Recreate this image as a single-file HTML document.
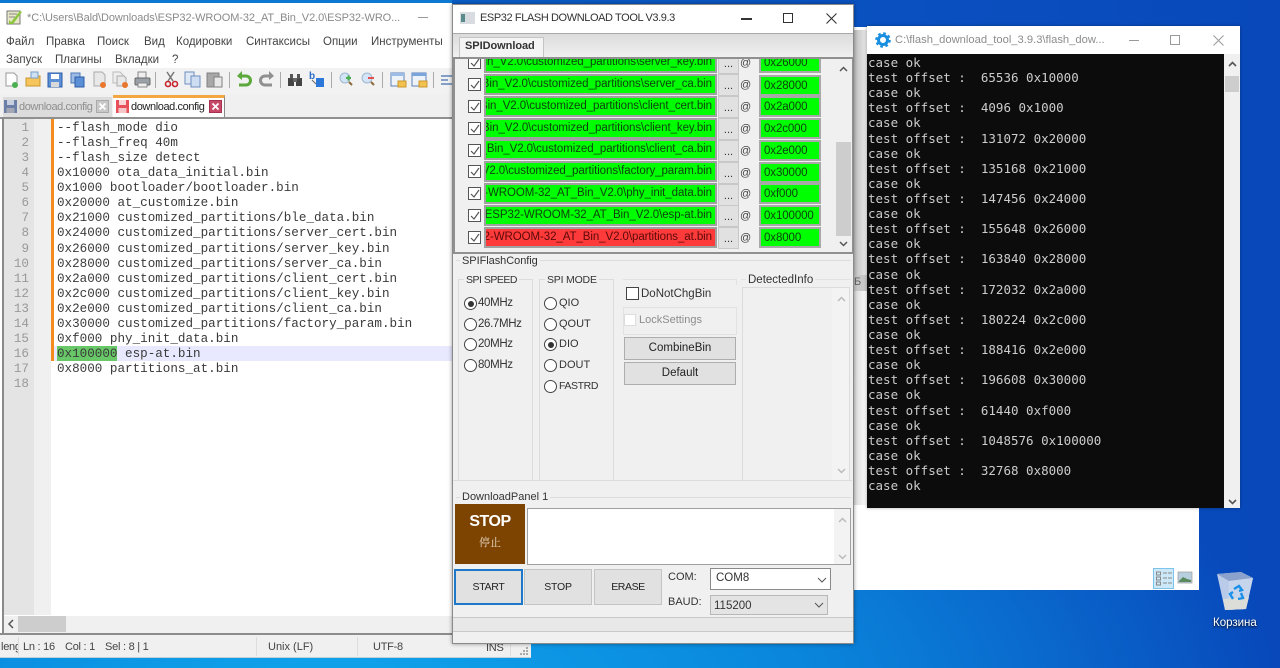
<!DOCTYPE html>
<html><head><meta charset="utf-8"><style>
html,body{margin:0;padding:0;width:1280px;height:668px;overflow:hidden}
body{position:relative;font-family:"Liberation Sans","Noto Sans CJK SC",sans-serif;font-size:11.5px;color:#222;background:radial-gradient(ellipse 950px 420px at 330px 700px,#0fa6ec 0,#0a86dc 50%,rgba(10,76,188,0) 100%),linear-gradient(90deg,#0a6acb 0,#0a50c0 70%,#0848ba 100%);filter:blur(.3px)}
div,span{position:absolute;box-sizing:border-box}
.t{white-space:nowrap;line-height:14px}
svg{position:absolute;overflow:visible}
.mono{font-family:"Liberation Mono",monospace;font-size:12.6px;line-height:15.07px;white-space:pre;color:#3a3a3a}
.con{font-family:"DejaVu Sans Mono","Liberation Mono",monospace;font-size:12.5px;line-height:15.11px;white-space:pre;color:#ccc}
.f{background:#0f0;border:2px solid #a0a0a0;overflow:hidden;left:484px;width:233px;height:21px}
.f span{right:3px;top:1px;white-space:nowrap;line-height:15px;color:#0f420f;font-size:11.5px;letter-spacing:-.07px}
.a{background:#0f0;border:2px solid #a8a8a8;left:759px;width:62px;height:21px;padding:2px 0 0 3px;line-height:14px;font-size:11.5px;letter-spacing:-.1px;color:#0f420f;white-space:nowrap}
.b{background:#e1e1e1;border:1px solid #c8c8c8;left:718px;width:21px;height:22px;text-align:center;line-height:22px;font-size:11px;color:#333}
.at{left:740px;width:11px;text-align:center;color:#444;font-size:11px;line-height:14px}
.c{left:468px;width:13px;height:13px;border:1px solid #555;background:#fff}
.c svg{left:1px;top:1px}
.r{width:13px;height:13px;border:1px solid #444;border-radius:50%;background:#fff}
.r i{position:absolute;left:2.5px;top:2.5px;width:6px;height:6px;border-radius:50%;background:#333}
.btn{background:#e1e1e1;border:1px solid #adadad;text-align:center;color:#222}
.g{border:1px solid #dcdcdc}
.m{color:#444;font-size:11.5px}
.s{color:#444;font-size:11px;letter-spacing:-.25px}
</style></head><body>

<!-- window behind -->
<div style="left:853px;top:27px;width:346px;height:563px;background:#fff"></div>
<div style="left:853px;top:30px;width:14px;height:245px;background:linear-gradient(90deg,#bdbdbd,#e8e8e8)"></div>
<div style="left:853px;top:275px;width:14px;height:16px;background:#c8c8c8;color:#666;font-size:11px;line-height:14px;overflow:hidden;padding-left:1px">Б</div>
<div style="left:853px;top:291px;width:14px;height:214px;background:linear-gradient(90deg,#d8d8d8,#fbfbfb)"></div>
<div style="left:1153px;top:568px;width:21px;height:21px;background:#cde8f8;border:1px solid #7cc4ea"></div>
<svg style="left:1156px;top:571px" width="18" height="16" fill="none" stroke="#888"><rect x=".5" y="1" width="4" height="3"/><rect x=".5" y="6" width="4" height="3"/><rect x=".5" y="11" width="4" height="3"/><path d="M7 2h4M12 2h4M7 7h4M12 7h4M7 12h4M12 12h4"/></svg>
<svg style="left:1178px;top:572px" width="14" height="12"><rect width="14" height="11" fill="#b8cfe0" stroke="#999" stroke-width=".7"/><path d="M1 9l4-4 4 2 4 1v2H1z" fill="#5b8a5e"/></svg>

<!-- recycle bin -->
<svg style="left:1214px;top:569px" width="40" height="48" viewBox="0 0 40 48">
<path d="M3 5L27 3L39 9L32 40L11 41Z" fill="#b9cbe8"/>
<path d="M3 5L27 3L39 9L15 12Z" fill="#8aa2cc"/>
<path d="M15 12L39 9L32 40L14 41Z" fill="#c6d5ec"/>
<path d="M9 30L35 28L32 40L11 41Z" fill="#dcdcd8"/>
<path d="M20 20l5-3 3 4 -3 1 M27 24l2 5-5 1 M19 30l-3-5 3-2" fill="none" stroke="#1a90e8" stroke-width="2.4"/>
</svg>
<div class="t" style="left:1213px;top:616px;color:#fff;font-size:11.5px;text-shadow:0 1px 2px #000">Корзина</div>

<!-- Notepad++ window -->
<div style="left:0;top:0;width:452px;height:3px;background:#0c78d0"></div>
<div style="left:0;top:3px;width:452px;height:65px;background:#fff"></div>
<div style="left:0;top:68px;width:452px;height:26px;background:#f2f2f2"></div>
<div style="left:0;top:94px;width:452px;height:24px;background:#f0f0f0"></div>
<div style="left:0;top:118px;width:452px;height:515px;background:#fff"></div>
<div style="left:0;top:633px;width:531px;height:25px;background:#f0f0f0;border-top:2px solid #8c8c8c;border-bottom:1px solid #c0d0d8"></div>

<svg style="left:6px;top:8px" width="18" height="18" viewBox="0 0 18 18"><rect x="1" y="3" width="13" height="13" fill="#e8e8c8" stroke="#777"/><path d="M3 12l2 2 9-11 2 1-9 12-4 0z" fill="#8cc63f"/><path d="M3 6h8M3 9h6" stroke="#888"/></svg>
<div class="t" style="left:27px;top:11px;color:#8a8a8a;font-size:11px;letter-spacing:-.08px">*C:\Users\Bald\Downloads\ESP32-WROOM-32_AT_Bin_V2.0\ESP32-WRO...</div>
<div style="left:418px;top:17px;width:10px;height:1px;background:#999"></div>

<div class="t m" style="left:6px;top:35px">Файл</div>
<div class="t m" style="left:46px;top:35px">Правка</div>
<div class="t m" style="left:97px;top:35px">Поиск</div>
<div class="t m" style="left:144px;top:35px">Вид</div>
<div class="t m" style="left:176px;top:35px">Кодировки</div>
<div class="t m" style="left:246px;top:35px">Синтаксисы</div>
<div class="t m" style="left:323px;top:35px">Опции</div>
<div class="t m" style="left:371px;top:35px">Инструменты</div>
<div class="t m" style="left:6px;top:53px">Запуск</div>
<div class="t m" style="left:55px;top:53px">Плагины</div>
<div class="t m" style="left:115px;top:53px">Вкладки</div>
<div class="t m" style="left:172px;top:53px">?</div>

<!-- toolbar -->
<svg style="left:0;top:68px" width="452" height="26" viewBox="0 0 452 26" fill="none">
<path d="M6 5h8l3 3v10H6z" fill="#fff" stroke="#999"/><circle cx="15" cy="17" r="3" fill="#4caf50"/>
<path d="M26 10h6l2-2h6v10H26z" fill="#f6c65c" stroke="#c9962e"/><path d="M31 4h7v6h-7z" fill="#cfe2f5" stroke="#7b9dc4"/>
<rect x="48" y="5" width="14" height="14" fill="#5b8fd6" stroke="#2d5ea8"/><rect x="51" y="6" width="8" height="5" fill="#fff"/><rect x="51" y="14" width="8" height="5" fill="#d9d9d9"/>
<rect x="71" y="5" width="9" height="10" fill="#9dbde6" stroke="#4c78b8"/><rect x="75" y="9" width="9" height="10" fill="#5b8fd6" stroke="#2d5ea8"/>
<path d="M94 4h8l3 3v11H94z" fill="#e8e8e8" stroke="#aaa"/><circle cx="103" cy="17" r="3" fill="#e8762c"/>
<path d="M113 4h7l3 3v8h-10z" fill="#eee" stroke="#bbb"/><path d="M117 8h7l2 2v8h-9z" fill="#e8e8e8" stroke="#aaa"/><circle cx="125" cy="17" r="3" fill="#e8762c"/>
<rect x="138" y="4" width="8" height="6" fill="#eee" stroke="#888"/><rect x="135" y="10" width="15" height="7" rx="1" fill="#9aa0a8" stroke="#666"/><rect x="138" y="15" width="9" height="4" fill="#eee" stroke="#888"/>
<path d="M155.500 4v16" stroke="#aaa"/>
<path d="M174 4l-6 9M167 4l6 9" stroke="#777" stroke-width="1.500"/><circle cx="168" cy="16" r="2.500" stroke="#c8242c" stroke-width="1.600"/><circle cx="175" cy="16" r="2.500" stroke="#c8242c" stroke-width="1.600"/>
<rect x="185" y="4" width="9" height="12" fill="#dfe8f5" stroke="#6d8fc0"/><rect x="191" y="8" width="9" height="11" fill="#cfddf2" stroke="#6d8fc0"/>
<rect x="207" y="5" width="12" height="14" fill="#a8a8a8" stroke="#808080"/><rect x="214" y="9" width="8" height="10" fill="#e8e8e8" stroke="#808080"/>
<path d="M229.500 4v16" stroke="#aaa"/>
<path d="M240 8h6a4 4 0 0 1 0 9h-7" stroke="#5ca83c" stroke-width="3"/><path d="M242 3l-5 5 5 4z" fill="#5ca83c"/>
<path d="M271 8h-6a4 4 0 0 0 0 9h7" stroke="#909090" stroke-width="3"/><path d="M269 3l5 5-5 4z" fill="#909090"/>
<path d="M280.500 4v16" stroke="#aaa"/>
<rect x="288" y="10" width="6" height="8" fill="#444"/><rect x="296" y="10" width="6" height="8" fill="#444"/><rect x="290" y="6" width="3" height="5" fill="#555"/><rect x="297" y="6" width="3" height="5" fill="#555"/><rect x="293" y="10" width="4" height="4" fill="#666"/>
<text x="309" y="11" font-family="Liberation Sans" font-weight="bold" font-size="10" fill="#2c6cc8">b</text><rect x="316" y="10" width="8" height="9" fill="#2c78d8"/><path d="M312 12l4 4" stroke="#666"/>
<path d="M331.500 4v16" stroke="#aaa"/>
<circle cx="345" cy="10" r="5" fill="#d2e4f5" stroke="#a0b8d0"/><path d="M349 14l3 3" stroke="#8a6a3c" stroke-width="2"/><path d="M346 10h5M348.500 7.500v5" stroke="#4caf50" stroke-width="2"/>
<circle cx="367" cy="10" r="5" fill="#d2e4f5" stroke="#a0b8d0"/><path d="M371 14l3 3" stroke="#8a6a3c" stroke-width="2"/><path d="M368 10h6" stroke="#e85050" stroke-width="2"/>
<path d="M382.500 4v16" stroke="#aaa"/>
<rect x="391" y="5" width="13" height="13" fill="#eef3fa" stroke="#5d80b8"/><rect x="391" y="5" width="13" height="3" fill="#9dbde6"/><rect x="398" y="13" width="8" height="6" fill="#f2c14e" stroke="#c9962e"/>
<rect x="412" y="5" width="14" height="13" fill="#eef3fa" stroke="#5d80b8"/><rect x="412" y="5" width="14" height="3" fill="#7ba3dc"/><rect x="419" y="13" width="8" height="6" fill="#f2c14e" stroke="#c9962e"/>
<path d="M433.500 4v16" stroke="#aaa"/>
<path d="M441 8h11M441 12h7M441 16h11" stroke="#5f84b8" stroke-width="1.500"/>
</svg>

<!-- tabs -->
<div style="left:3px;top:97px;width:109px;height:21px;background:#dcdcdc"></div>
<div style="left:113px;top:95px;width:112px;height:23px;background:#fff;border-top:3px solid #f4a640;border-right:1px solid #888"></div>
<svg style="left:4px;top:100px" width="13" height="13"><rect width="13" height="13" fill="#6b7fa8"/><rect x="3" y="0" width="7" height="5" fill="#c8d0e0"/><rect x="2.500" y="8" width="8" height="5" fill="#a4a8b4"/></svg>
<div class="t" style="left:19px;top:100px;color:#8e8e8e;font-size:11px;letter-spacing:-.4px">download.config</div>
<svg style="left:96px;top:100px" width="13" height="13"><rect width="12" height="12" x=".5" y=".5" fill="#c8c8c8" stroke="#aaa"/><path d="M3.500 3.500l6 6M9.500 3.500l-6 6" stroke="#fff" stroke-width="1.800"/></svg>
<svg style="left:116px;top:100px" width="13" height="13"><rect width="13" height="13" fill="#e8505a"/><rect x="3" y="0" width="7" height="5" fill="#fbd8d8"/><rect x="2.500" y="8" width="8" height="5" fill="#f4c8c8"/></svg>
<div class="t" style="left:131px;top:100px;color:#222;font-size:11px;letter-spacing:-.4px">download.config</div>
<svg style="left:209px;top:100px" width="13" height="13"><rect width="12" height="12" x=".5" y=".5" fill="#c84868" stroke="#a83050"/><path d="M3.500 3.500l6 6M9.500 3.500l-6 6" stroke="#fff" stroke-width="1.800"/></svg>

<!-- editor -->
<div style="left:0;top:117px;width:452px;height:2px;background:#909090"></div>
<div style="left:2px;top:118px;width:2px;height:515px;background:#8a8a8a"></div>
<div style="left:4px;top:119px;width:30px;height:496px;background:#e4e4e4"></div>
<div style="left:34px;top:119px;width:17px;height:496px;background:#f0f0f0"></div>
<div style="left:51px;top:119px;width:3px;height:242px;background:#f58a1f"></div>
<div style="left:54px;top:346px;width:398px;height:15px;background:#e8e8ff"></div>
<div style="left:57px;top:346px;width:60px;height:15px;background:#68c868"></div>
<div class="mono" style="left:4px;top:121px;width:25px;text-align:right;color:#999">1
2
3
4
5
6
7
8
9
10
11
12
13
14
15
16
17
18</div>
<div class="mono" style="left:57px;top:121px">--flash_mode dio
--flash_freq 40m
--flash_size detect
0x10000 ota_data_initial.bin
0x1000 bootloader/bootloader.bin
0x20000 at_customize.bin
0x21000 customized_partitions/ble_data.bin
0x24000 customized_partitions/server_cert.bin
0x26000 customized_partitions/server_key.bin
0x28000 customized_partitions/server_ca.bin
0x2a000 customized_partitions/client_cert.bin
0x2c000 customized_partitions/client_key.bin
0x2e000 customized_partitions/client_ca.bin
0x30000 customized_partitions/factory_param.bin
0xf000 phy_init_data.bin
0x100000 esp-at.bin
0x8000 partitions_at.bin</div>
<div style="left:4px;top:616px;width:448px;height:17px;background:#f0f0f0"></div>
<div style="left:18px;top:616px;width:48px;height:16px;background:#cdcdcd"></div>
<svg style="left:7px;top:619px" width="8" height="10" fill="none"><path d="M6 1L2 5l4 4" stroke="#555" stroke-width="1.500"/></svg>

<!-- status bar -->
<div class="t s" style="left:1px;top:640px;width:17px;overflow:hidden">length</div>
<div style="left:18px;top:637px;width:1px;height:19px;background:#ddd"></div>
<div class="t s" style="left:23px;top:640px">Ln : 16</div>
<div class="t s" style="left:65px;top:640px">Col : 1</div>
<div class="t s" style="left:105px;top:640px">Sel : 8 | 1</div>
<div style="left:256px;top:637px;width:1px;height:19px;background:#ddd"></div>
<div class="t s" style="left:268px;top:640px;letter-spacing:0">Unix (LF)</div>
<div style="left:357px;top:637px;width:1px;height:19px;background:#ddd"></div>
<div class="t s" style="left:373px;top:640px">UTF-8</div>
<div class="t s" style="left:486px;top:641px">INS</div>
<div style="left:510px;top:637px;width:1px;height:19px;background:#ddd"></div>
<svg style="left:519px;top:647px" width="10" height="9" fill="#aaa"><rect x="7" y="0" width="2" height="2"/><rect x="4" y="3" width="2" height="2"/><rect x="7" y="3" width="2" height="2"/><rect x="1" y="6" width="2" height="2"/><rect x="4" y="6" width="2" height="2"/><rect x="7" y="6" width="2" height="2"/></svg>

<!-- console window -->
<div style="left:867px;top:26px;width:373px;height:482px;background:#fff;box-shadow:0 0 3px rgba(0,0,0,.35)"></div>
<svg style="left:875px;top:32px" width="16" height="16" viewBox="0 0 16 16"><circle cx="8" cy="8" r="4.500" fill="none" stroke="#1a8fe0" stroke-width="3"/><circle cx="8" cy="8" r="6.500" fill="none" stroke="#1a8fe0" stroke-width="2.600" stroke-dasharray="2.600 2.500"/></svg>
<div class="t" style="left:895px;top:33px;color:#8c8c8c;font-size:11.2px">C:\flash_download_tool_3.9.3\flash_dow...</div>
<div style="left:1129px;top:40px;width:10px;height:1px;background:#999"></div>
<div style="left:1170px;top:35px;width:10px;height:10px;border:1px solid #999"></div>
<svg style="left:1213px;top:35px" width="11" height="11"><path d="M.5.500l10 10M10.500.500l-10 10" stroke="#999"/></svg>
<div style="left:867px;top:54px;width:357px;height:454px;background:#0c0c0c"></div>
<div style="left:1224px;top:54px;width:16px;height:454px;background:#f0f0f0"></div>
<div style="left:1225px;top:76px;width:14px;height:16px;background:#cdcdcd"></div>
<svg style="left:1228px;top:61px" width="9" height="6" fill="none"><path d="M1 5l3.500-3.500L8 5" stroke="#555" stroke-width="1.600"/></svg>
<svg style="left:1228px;top:499px" width="9" height="6" fill="none"><path d="M1 1l3.500 3.500L8 1" stroke="#555" stroke-width="1.600"/></svg>
<div class="con" style="left:868px;top:55px">case ok
test offset :  65536 0x10000
case ok
test offset :  4096 0x1000
case ok
test offset :  131072 0x20000
case ok
test offset :  135168 0x21000
case ok
test offset :  147456 0x24000
case ok
test offset :  155648 0x26000
case ok
test offset :  163840 0x28000
case ok
test offset :  172032 0x2a000
case ok
test offset :  180224 0x2c000
case ok
test offset :  188416 0x2e000
case ok
test offset :  196608 0x30000
case ok
test offset :  61440 0xf000
case ok
test offset :  1048576 0x100000
case ok
test offset :  32768 0x8000
case ok</div>

<!-- ESP window -->
<div style="left:452px;top:4px;width:402px;height:640px;background:#f0f0f0;border:1px solid #8a8a8a;box-shadow:0 0 4px rgba(0,0,0,.4)"></div>
<div style="left:453px;top:5px;width:400px;height:28px;background:#fff"></div>
<svg style="left:460px;top:12px" width="15" height="12"><rect width="15" height="12" fill="#d8dce0"/><rect x="1" y="2" width="4" height="8" fill="#5a8a8c"/></svg>
<div class="t" style="left:480px;top:11px;color:#333;font-size:11px;letter-spacing:-.4px">ESP32 FLASH DOWNLOAD TOOL V3.9.3</div>
<div style="left:741px;top:18px;width:11px;height:1.500px;background:#333"></div>
<div style="left:783px;top:13px;width:10px;height:10px;border:1px solid #333"></div>
<svg style="left:826px;top:13px" width="11" height="11"><path d="M.5.500l10 10M10.500.500l-10 10" stroke="#333" stroke-width="1.100"/></svg>
<div style="left:453px;top:33px;width:400px;height:24px;background:linear-gradient(#dcdcdc,#f0f0f0);border-top:1px solid #aaa"></div>
<div style="left:459px;top:37px;width:85px;height:21px;background:#f4f4f4;border:1px solid #c4c4c4;border-bottom:0"></div>
<div class="t" style="left:465px;top:39px;font-weight:bold;font-size:11px;letter-spacing:-.05px;color:#333">SPIDownload</div>

<!-- list -->
<div style="left:453px;top:57px;width:400px;height:197px;background:#f0f0f0;border:2px solid #909090;border-width:2px 1px 2px 2px;overflow:hidden"></div>
<div style="left:455px;top:59px;width:380px;height:193px;overflow:hidden">
<div style="left:-455px;top:-59px;width:900px;height:300px">
<div class="c" style="top:56px"><svg width="10" height="10" fill="none"><path d="M1 5l3 3 5-7" stroke="#555" stroke-width="1.200"/></svg></div>
<div class="f" style="top:52px"><span>C:\Users\Bald\Downloads\ESP32-WROOM-32_AT_Bin_V2.0\customized_partitions\server_key.bin</span></div>
<div class="b" style="top:52px">...</div><div class="at" style="top:56px">@</div><div class="a" style="top:52px">0x26000</div>
</div></div>
<div class="c" style="top:78px"><svg width="10" height="10" fill="none"><path d="M1 5l3 3 5-7" stroke="#555" stroke-width="1.200"/></svg></div>
<div class="f" style="top:74px"><span>C:\Users\Bald\Downloads\ESP32-WROOM-32_AT_Bin_V2.0\customized_partitions\server_ca.bin</span></div>
<div class="b" style="top:74px">...</div><div class="at" style="top:78px">@</div><div class="a" style="top:75px">0x28000</div>
<div class="c" style="top:100px"><svg width="10" height="10" fill="none"><path d="M1 5l3 3 5-7" stroke="#555" stroke-width="1.200"/></svg></div>
<div class="f" style="top:96px"><span>C:\Users\Bald\Downloads\ESP32-WROOM-32_AT_Bin_V2.0\customized_partitions\client_cert.bin</span></div>
<div class="b" style="top:96px">...</div><div class="at" style="top:100px">@</div><div class="a" style="top:96px">0x2a000</div>
<div class="c" style="top:122px"><svg width="10" height="10" fill="none"><path d="M1 5l3 3 5-7" stroke="#555" stroke-width="1.200"/></svg></div>
<div class="f" style="top:118px"><span>C:\Users\Bald\Downloads\ESP32-WROOM-32_AT_Bin_V2.0\customized_partitions\client_key.bin</span></div>
<div class="b" style="top:118px">...</div><div class="at" style="top:122px">@</div><div class="a" style="top:118px">0x2c000</div>
<div class="c" style="top:144px"><svg width="10" height="10" fill="none"><path d="M1 5l3 3 5-7" stroke="#555" stroke-width="1.200"/></svg></div>
<div class="f" style="top:139px"><span>C:\Users\Bald\Downloads\ESP32-WROOM-32_AT_Bin_V2.0\customized_partitions\client_ca.bin</span></div>
<div class="b" style="top:140px">...</div><div class="at" style="top:144px">@</div><div class="a" style="top:140px">0x2e000</div>
<div class="c" style="top:165px"><svg width="10" height="10" fill="none"><path d="M1 5l3 3 5-7" stroke="#555" stroke-width="1.200"/></svg></div>
<div class="f" style="top:161px"><span>C:\Users\Bald\Downloads\ESP32-WROOM-32_AT_Bin_V2.0\customized_partitions\factory_param.bin</span></div>
<div class="b" style="top:162px">...</div><div class="at" style="top:166px">@</div><div class="a" style="top:162px">0x30000</div>
<div class="c" style="top:187px"><svg width="10" height="10" fill="none"><path d="M1 5l3 3 5-7" stroke="#555" stroke-width="1.200"/></svg></div>
<div class="f" style="top:183px"><span>C:\Users\Bald\Downloads\ESP32-WROOM-32_AT_Bin_V2.0\phy_init_data.bin</span></div>
<div class="b" style="top:184px">...</div><div class="at" style="top:187px">@</div><div class="a" style="top:183px">0xf000</div>
<div class="c" style="top:209px"><svg width="10" height="10" fill="none"><path d="M1 5l3 3 5-7" stroke="#555" stroke-width="1.200"/></svg></div>
<div class="f" style="top:205px"><span>C:\Users\Bald\Downloads\ESP32-WROOM-32_AT_Bin_V2.0\esp-at.bin</span></div>
<div class="b" style="top:205px">...</div><div class="at" style="top:209px">@</div><div class="a" style="top:205px">0x100000</div>
<div class="c" style="top:231px"><svg width="10" height="10" fill="none"><path d="M1 5l3 3 5-7" stroke="#555" stroke-width="1.200"/></svg></div>
<div class="f" style="top:227px;background:#ff3a3a"><span style="color:#5a0a0a">C:\Users\Bald\Downloads\ESP32-WROOM-32_AT_Bin_V2.0\partitions_at.bin</span></div>
<div class="b" style="top:227px">...</div><div class="at" style="top:231px">@</div><div class="a" style="top:227px">0x8000</div>
<div style="left:836px;top:59px;width:16px;height:193px;background:#f0f0f0"></div>
<div style="left:836px;top:142px;width:15px;height:94px;background:#cdcdcd"></div>
<svg style="left:839px;top:66px" width="9" height="6" fill="none"><path d="M1 5l3.500-3.500L8 5" stroke="#555" stroke-width="1.500"/></svg>
<svg style="left:839px;top:241px" width="9" height="6" fill="none"><path d="M1 1l3.500 3.500L8 1" stroke="#555" stroke-width="1.500"/></svg>

<!-- SPIFlashConfig -->
<div style="left:456px;top:260px;width:395px;height:1px;background:#dcdcdc"></div>
<div class="t" style="left:460px;top:254px;padding:0 2px;background:#f0f0f0;color:#333;font-size:11px;letter-spacing:-.05px">SPIFlashConfig</div>
<div class="g" style="left:458px;top:279px;width:75px;height:202px"></div>
<div class="t" style="left:464px;top:273px;padding:0 2px;background:#f0f0f0;color:#333;font-size:10.5px;letter-spacing:-.5px">SPI SPEED</div>
<div class="g" style="left:539px;top:279px;width:75px;height:202px"></div>
<div class="t" style="left:545px;top:273px;padding:0 2px;background:#f0f0f0;color:#333;font-size:10.5px;letter-spacing:-.2px">SPI MODE</div>
<div style="left:623px;top:279px;width:114px;height:1px;background:#e2e2e2"></div>
<div style="left:736px;top:279px;width:1px;height:6px;background:#e2e2e2"></div>
<div class="r" style="left:464px;top:297px"><i></i></div><div class="t" style="left:478px;top:296px;color:#333;font-size:11.5px;letter-spacing:-.35px">40MHz</div>
<div class="r" style="left:464px;top:318px"></div><div class="t" style="left:478px;top:317px;color:#333;font-size:11.5px;letter-spacing:-.35px">26.7MHz</div>
<div class="r" style="left:464px;top:338px"></div><div class="t" style="left:478px;top:337px;color:#333;font-size:11.5px;letter-spacing:-.35px">20MHz</div>
<div class="r" style="left:464px;top:359px"></div><div class="t" style="left:478px;top:358px;color:#333;font-size:11.5px;letter-spacing:-.35px">80MHz</div>
<div class="r" style="left:544px;top:297px"></div><div class="t" style="left:559px;top:296px;color:#333;font-size:11px">QIO</div>
<div class="r" style="left:544px;top:318px"></div><div class="t" style="left:559px;top:317px;color:#333;font-size:11px">QOUT</div>
<div class="r" style="left:544px;top:338px"><i></i></div><div class="t" style="left:559px;top:337px;color:#333;font-size:11px">DIO</div>
<div class="r" style="left:544px;top:359px"></div><div class="t" style="left:559px;top:358px;color:#333;font-size:11px">DOUT</div>
<div class="r" style="left:544px;top:380px"></div><div class="t" style="left:559px;top:379px;color:#333;font-size:10.5px;letter-spacing:-.4px">FASTRD</div>
<div style="left:626px;top:287px;width:13px;height:13px;border:1px solid #444;background:#fff"></div>
<div class="t" style="left:641px;top:287px;color:#333;font-size:11.5px">DoNotChgBin</div>
<div style="left:623px;top:307px;width:114px;height:28px;border:1px solid #e2e2e2"></div>
<div style="left:624px;top:314px;width:12px;height:12px;border:1px solid #ddd;background:#fff"></div>
<div class="t" style="left:639px;top:313px;color:#8c8c8c;font-size:11px">LockSettings</div>
<div class="btn" style="left:624px;top:337px;width:112px;height:23px;line-height:21px">CombineBin</div>
<div class="btn" style="left:624px;top:362px;width:112px;height:23px;line-height:20px">Default</div>
<div style="left:741px;top:279px;width:110px;height:1px;background:#e2e2e2"></div>
<div class="t" style="left:746px;top:273px;padding:0 2px;background:#f0f0f0;color:#333;font-size:11.5px">DetectedInfo</div>
<div style="left:742px;top:287px;width:108px;height:194px;border:1px solid #dcdcdc;background:#f0f0f0"></div>
<div style="left:832px;top:288px;width:17px;height:192px;background:#f3f3f3"></div>
<svg style="left:837px;top:296px" width="9" height="6" fill="none"><path d="M1 5l3.500-3.500L8 5" stroke="#bbb" stroke-width="1.500"/></svg>
<svg style="left:837px;top:468px" width="9" height="6" fill="none"><path d="M1 1l3.500 3.500L8 1" stroke="#bbb" stroke-width="1.500"/></svg>
<div style="left:453px;top:480px;width:399px;height:1px;background:#dcdcdc"></div>

<!-- DownloadPanel -->
<div style="left:456px;top:497px;width:395px;height:1px;background:#dcdcdc"></div>
<div class="t" style="left:460px;top:490px;padding:0 2px;background:#f0f0f0;color:#333;font-size:11px">DownloadPanel 1</div>
<div style="left:455px;top:504px;width:70px;height:60px;background:#7d4300"></div>
<div class="t" style="left:455px;top:512px;width:70px;text-align:center;color:#fff;font-size:16px;letter-spacing:-.5px;line-height:20px;font-weight:bold">STOP</div>
<div class="t" style="left:455px;top:535px;width:70px;text-align:center;color:#e8dccc;font-size:11px;line-height:15px;font-family:'Noto Serif CJK SC','Noto Sans CJK SC',sans-serif">停止</div>
<div style="left:527px;top:508px;width:324px;height:57px;background:#fff;border:1px solid #a0a0a0"></div>
<div style="left:834px;top:509px;width:16px;height:55px;background:#f3f3f3"></div>
<svg style="left:838px;top:517px" width="9" height="6" fill="none"><path d="M1 5l3.500-3.500L8 5" stroke="#bbb" stroke-width="1.500"/></svg>
<svg style="left:838px;top:554px" width="9" height="6" fill="none"><path d="M1 1l3.500 3.500L8 1" stroke="#bbb" stroke-width="1.500"/></svg>
<div class="btn" style="left:454px;top:569px;width:69px;height:36px;line-height:32px;border:2px solid #1e78c8;font-size:10.5px;letter-spacing:-.3px">START</div>
<div class="btn" style="left:524px;top:569px;width:68px;height:36px;line-height:34px;border-color:#c4c4c4;font-size:10.5px;letter-spacing:-.2px">STOP</div>
<div class="btn" style="left:594px;top:569px;width:68px;height:36px;line-height:34px;border-color:#c4c4c4;font-size:10.5px;letter-spacing:-.4px">ERASE</div>
<div class="t" style="left:668px;top:570px;color:#333;font-size:11px">COM:</div>
<div class="t" style="left:668px;top:595px;color:#333;font-size:11px">BAUD:</div>
<div style="left:710px;top:568px;width:121px;height:22px;background:#fff;border:1px solid #8a8a8a;padding-left:5px;line-height:19px;color:#333">COM8</div>
<svg style="left:817px;top:577px" width="10" height="6" fill="none"><path d="M1 1l4 4 4-4" stroke="#555"/></svg>
<div style="left:710px;top:595px;width:118px;height:20px;background:#e4e4e4;border:1px solid #b8b8b8;padding-left:3px;line-height:20px;color:#333">115200</div>
<svg style="left:814px;top:602px" width="10" height="6" fill="none"><path d="M1 1l4 4 4-4" stroke="#555"/></svg>
<div style="left:453px;top:617px;width:400px;height:15px;background:#e8e8e8;border-top:1px solid #c8c8c8;border-bottom:1px solid #c8c8c8"></div>
</body></html>
